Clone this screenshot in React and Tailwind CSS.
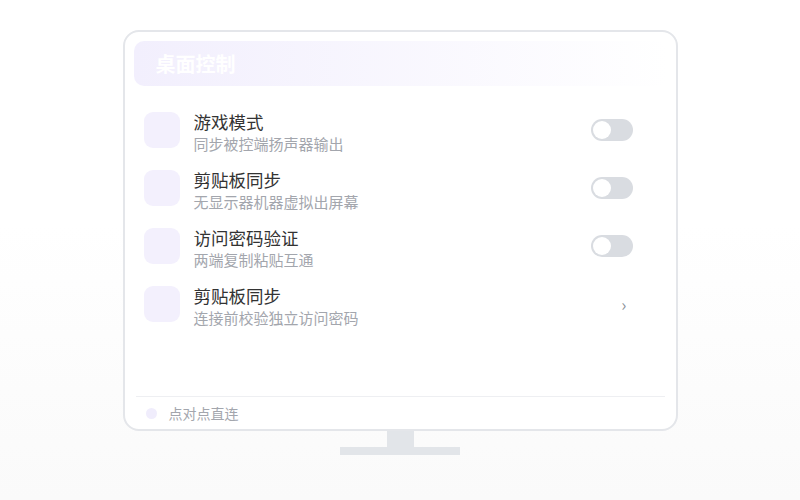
import React from 'react';

// settings rows shown inside the monitor mock
const rows = [
  { title: '游戏模式', desc: '同步被控端扬声器输出', action: 'toggle' },
  { title: '剪贴板同步', desc: '无显示器机器虚拟出屏幕', action: 'toggle' },
  { title: '访问密码验证', desc: '两端复制粘贴互通', action: 'toggle' },
  { title: '剪贴板同步', desc: '连接前校验独立访问密码', action: 'arrow' },
];

const Toggle = () => (
  <div className="w-[42px] h-[22px] rounded-full bg-[#d9dce1] p-[2px] flex items-center">
    <div className="w-[18px] h-[18px] rounded-full bg-white"></div>
  </div>
);

const Row = ({ row }) => (
  <div className="h-[58px] flex items-center pl-[10px] pr-[34px]">
    <div className="w-[36px] h-[36px] rounded-[9px] bg-[#f3f0fd] shrink-0"></div>
    <div className="flex-grow ml-[14px] mt-[6px] flex flex-col">
      <p className="text-[17.5px] leading-[22px] text-[#333]">{row.title}</p>
      <p className="text-[15px] leading-[22px] text-[#a3a6ad]">{row.desc}</p>
    </div>
    {row.action === 'toggle' ? (
      <Toggle />
    ) : (
      <span className="text-[17px] text-[#8a8f98] mr-[6px]">›</span>
    )}
  </div>
);

const App = () => {
  return (
    <div
      className="w-[800px] h-[500px] bg-gradient-to-b from-white from-45% to-[#fafafa] flex flex-col items-center pt-[30px]"
      style={{ fontFamily: '"Noto Sans CJK SC", "Noto Sans", sans-serif' }}
    >
      {/* monitor frame */}
      <div className="w-[555px] h-[401px] bg-white border-2 border-[#e4e6ea] rounded-[16px] p-[9px] pb-0 flex flex-col">
        {/* header */}
        <div className="h-[45px] rounded-[10px] bg-gradient-to-r from-[#f2effd] to-white flex items-center pl-[22px]">
          <h1 className="text-[20px] font-bold text-white">桌面控制</h1>
        </div>

        <div className="flex-grow pt-[15px]">
          {rows.map((row, i) => (
            <Row key={i} row={row} />
          ))}
        </div>

        {/* footer */}
        <div className="border-t border-[#eeeff2] mx-[2px] h-[33px] flex items-center pl-[10px]">
          <div className="w-[11px] h-[11px] rounded-full bg-[#f0edfc]"></div>
          <span className="ml-[12px] text-[14px] text-[#a3a6ad]">点对点直连</span>
        </div>
      </div>

      {/* stand */}
      <div className="w-[27px] h-[16px] bg-[#e2e5e9]"></div>
      <div className="w-[120px] h-[8px] bg-[#e2e5e9]"></div>
    </div>
  );
};

export default App;
